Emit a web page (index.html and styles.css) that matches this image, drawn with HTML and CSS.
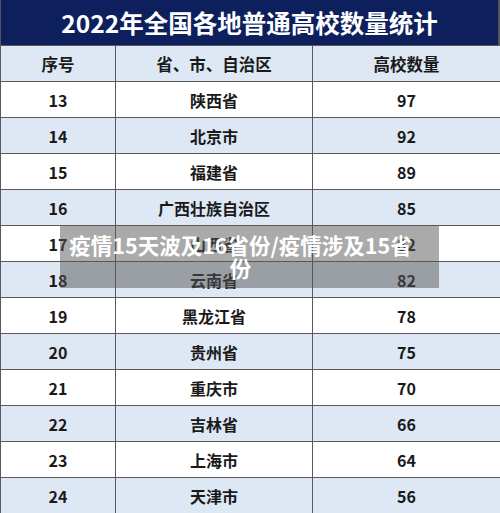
FILE: index.html
```html
<!DOCTYPE html>
<html lang="zh-CN">
<head>
    <meta charset="UTF-8">
    <meta name="viewport" content="width=device-width, initial-scale=1.0">
    <title>2022年全国各地普通高校数量统计</title>
    <link rel="stylesheet" href="styles.css">
</head>
<body>
    <div class="sheet">
        <div class="title">2022年全国各地普通高校数量统计</div>

        <table class="stats">
            <colgroup>
                <col class="col-no">
                <col class="col-name">
                <col class="col-count">
            </colgroup>
            <thead>
                <tr>
                    <th>序号</th>
                    <th>省、市、自治区</th>
                    <th>高校数量</th>
                </tr>
            </thead>
            <tbody>
                <tr><td>13</td><td>陕西省</td><td>97</td></tr>
                <tr><td>14</td><td>北京市</td><td>92</td></tr>
                <tr><td>15</td><td>福建省</td><td>89</td></tr>
                <tr><td>16</td><td>广西壮族自治区</td><td>85</td></tr>
                <tr><td>17</td><td>山西省</td><td>82</td></tr>
                <tr><td>18</td><td>云南省</td><td>82</td></tr>
                <tr><td>19</td><td>黑龙江省</td><td>78</td></tr>
                <tr><td>20</td><td>贵州省</td><td>75</td></tr>
                <tr><td>21</td><td>重庆市</td><td>70</td></tr>
                <tr><td>22</td><td>吉林省</td><td>66</td></tr>
                <tr><td>23</td><td>上海市</td><td>64</td></tr>
                <tr><td>24</td><td>天津市</td><td>56</td></tr>
            </tbody>
        </table>

        <!-- 标题遮罩 -->
        <div class="caption">疫情15天波及16省份/疫情涉及15省份</div>
    </div>
</body>
</html>
```

FILE: styles.css
```css
body {
    margin: 0;
    padding: 0;
    background-color: #ffffff;
    font-family: "Noto Sans CJK SC", "Noto Sans", sans-serif;
    color: #1a1a1a;
}

.sheet {
    position: relative;
    width: 500px;
    height: 513px;
    overflow: hidden;
}

.title {
    height: 45px;
    line-height: 45px;
    background-color: #0d1f5c;
    color: #ffffff;
    font-size: 24.5px;
    font-weight: bold;
    text-align: center;
    border-left: 1px solid #555;
    border-right: 2px solid #555;
}

.stats {
    width: 500px;
    border-collapse: collapse;
    table-layout: fixed;
}

.col-no {
    width: 115px;
}

.col-name {
    width: 197px;
}

.col-count {
    width: 188px;
}

.stats th,
.stats td {
    height: 35px;
    padding: 0;
    border: 1px solid #5a5a5a;
    text-align: center;
    font-weight: bold;
    font-size: 16px;
}

.stats th {
    font-size: 16.5px;
    background-color: #dde8f4;
}

.stats tbody tr:nth-child(even) td {
    background-color: #dde8f4;
}

.caption {
    position: absolute;
    left: 60px;
    top: 225px;
    width: 345px;
    padding: 8px 26px 9px 8px;
    background-color: rgba(85, 85, 85, 0.5);
    color: #ffffff;
    font-size: 21.5px;
    font-weight: bold;
    line-height: 23px;
    text-align: center;
}
```
